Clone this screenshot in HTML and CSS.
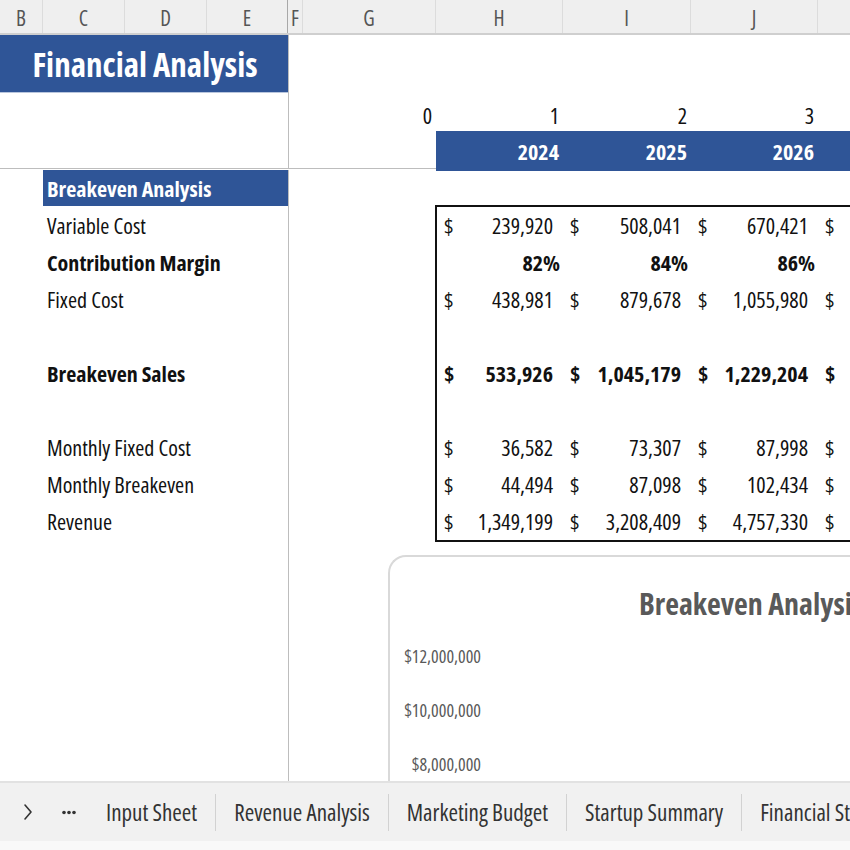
FILE: index.html
```html
<!DOCTYPE html>
<html>
<head>
<meta charset="utf-8">
<title>Financial Analysis</title>
<link rel="stylesheet" href="styles.css">
</head>
<body>
<div class="sheet">
  <div class="colheads">
    <div class="ch w-b">B</div>
    <div class="ch w-c">C</div>
    <div class="ch w-d">D</div>
    <div class="ch w-e ch-freeze">E</div>
    <div class="ch w-f">F</div>
    <div class="ch w-g">G</div>
    <div class="ch w-h">H</div>
    <div class="ch w-i">I</div>
    <div class="ch w-j">J</div>
    <div class="ch w-k"></div>
  </div>

  <div class="frozen-top">
    <div class="left-top">
      <div class="title">Financial Analysis</div>
    </div>
    <div class="right-top">
      <div class="rt-row rt-blank"></div>
      <div class="rt-row rt-idx">
        <div class="c-f"></div>
        <div class="num">0</div>
        <div class="num">1</div>
        <div class="num">2</div>
        <div class="num">3</div>
        <div></div>
      </div>
      <div class="rt-row rt-year">
        <div class="c-f"></div>
        <div></div>
        <div class="yr">2024</div>
        <div class="yr">2025</div>
        <div class="yr">2026</div>
        <div class="yr"></div>
      </div>
    </div>
  </div>

  <div class="main">
    <div class="left-pane">
      <div class="lrow lrow-head"><span class="lbl-head">Breakeven Analysis</span></div>
      <div class="lrow">Variable Cost</div>
      <div class="lrow bold">Contribution Margin</div>
      <div class="lrow">Fixed Cost</div>
      <div class="lrow"></div>
      <div class="lrow bold">Breakeven Sales</div>
      <div class="lrow"></div>
      <div class="lrow">Monthly Fixed Cost</div>
      <div class="lrow">Monthly Breakeven</div>
      <div class="lrow">Revenue</div>
    </div>

    <div class="right-pane">
      <div class="databox">
        <div class="drow">
          <div class="acc"><span>$</span><span>239,920</span></div>
          <div class="acc"><span>$</span><span>508,041</span></div>
          <div class="acc"><span>$</span><span>670,421</span></div>
          <div class="acc"><span>$</span><span></span></div>
        </div>
        <div class="drow bold">
          <div class="pct">82%</div>
          <div class="pct">84%</div>
          <div class="pct">86%</div>
          <div class="pct"></div>
        </div>
        <div class="drow">
          <div class="acc"><span>$</span><span>438,981</span></div>
          <div class="acc"><span>$</span><span>879,678</span></div>
          <div class="acc"><span>$</span><span>1,055,980</span></div>
          <div class="acc"><span>$</span><span></span></div>
        </div>
        <div class="drow"></div>
        <div class="drow bold">
          <div class="acc"><span>$</span><span>533,926</span></div>
          <div class="acc"><span>$</span><span>1,045,179</span></div>
          <div class="acc"><span>$</span><span>1,229,204</span></div>
          <div class="acc"><span>$</span><span></span></div>
        </div>
        <div class="drow"></div>
        <div class="drow">
          <div class="acc"><span>$</span><span>36,582</span></div>
          <div class="acc"><span>$</span><span>73,307</span></div>
          <div class="acc"><span>$</span><span>87,998</span></div>
          <div class="acc"><span>$</span><span></span></div>
        </div>
        <div class="drow">
          <div class="acc"><span>$</span><span>44,494</span></div>
          <div class="acc"><span>$</span><span>87,098</span></div>
          <div class="acc"><span>$</span><span>102,434</span></div>
          <div class="acc"><span>$</span><span></span></div>
        </div>
        <div class="drow">
          <div class="acc"><span>$</span><span>1,349,199</span></div>
          <div class="acc"><span>$</span><span>3,208,409</span></div>
          <div class="acc"><span>$</span><span>4,757,330</span></div>
          <div class="acc"><span>$</span><span></span></div>
        </div>
      </div>

      <div class="chart">
        <div class="chart-title">Breakeven Analysis</div>
        <div class="axis">
          <div class="tick">$12,000,000</div>
          <div class="tick">$10,000,000</div>
          <div class="tick">$8,000,000</div>
        </div>
      </div>
    </div>
  </div>

  <div class="tabs">
    <div class="tab-nav">
      <svg class="chev" width="10" height="18" viewBox="0 0 10 18"><path d="M2 2 L8 9 L2 16" fill="none" stroke="#333" stroke-width="1.6" stroke-linecap="round" stroke-linejoin="round"/></svg>
    </div>
    <div class="tab-more">
      <svg width="14" height="5" viewBox="0 0 14 5"><circle cx="2" cy="2.5" r="1.8" fill="#333"/><circle cx="7" cy="2.5" r="1.8" fill="#333"/><circle cx="12" cy="2.5" r="1.8" fill="#333"/></svg>
    </div>
    <div class="tab tab-first">Input Sheet</div>
    <div class="tab">Revenue Analysis</div>
    <div class="tab">Marketing Budget</div>
    <div class="tab">Startup Summary</div>
    <div class="tab tab-last">Financial Statements</div>
  </div>
  <div class="statusgap"></div>
</div>
</body>
</html>
```
FILE: styles.css
```css
* { box-sizing: border-box; }

html, body {
  margin: 0;
  padding: 0;
  background: #ffffff;
}

body {
  font-family: "Open Sans", "Liberation Sans", sans-serif;
  font-stretch: 75%;
  color: #111111;
  width: 850px;
  height: 850px;
  overflow: hidden;
}

.sheet {
  width: 850px;
  height: 850px;
  display: flex;
  flex-direction: column;
  overflow: hidden;
}

.bold { font-weight: 700; }

/* column headers */
.colheads {
  display: flex;
  height: 35px;
  flex: none;
  background: #efefef;
  border-bottom: 2px solid #cfcfcf;
}
.ch {
  flex: none;
  height: 33px;
  line-height: 36px;
  text-align: center;
  font-size: 21px;
  color: #555555;
  border-right: 1px solid #dcdcdc;
}
.ch-freeze { border-right: 1px solid #a8a8a8; }
.w-b { width: 43px; }
.w-c { width: 82px; }
.w-d { width: 82px; }
.w-e { width: 81px; }
.w-f { width: 15px; }
.w-g { width: 133px; }
.w-h { width: 127px; }
.w-i { width: 128px; }
.w-j { width: 127px; }
.w-k { flex: 1; border-right: none; }

/* frozen top rows */
.frozen-top {
  display: flex;
  height: 134px;
  flex: none;
  border-bottom: 1px solid #bdbdbd;
}
.left-top {
  width: 289px;
  flex: none;
  border-right: 1px solid #bdbdbd;
}
.title {
  height: 58px;
  background: #2f5597;
  color: #ffffff;
  font-weight: 700;
  font-size: 33px;
  line-height: 60px;
  text-align: center;
  padding-left: 2px;
  border-bottom: 1px solid #b9c6dd;
}
.right-top {
  flex: 1;
  display: flex;
  flex-direction: column;
}
.rt-row {
  display: grid;
  grid-template-columns: 14px 133px 127px 128px 127px 1fr;
}
.rt-blank { height: 59px; }
.rt-idx {
  height: 37px;
  font-size: 22px;
  color: #111111;
}
.num {
  text-align: right;
  padding-right: 4px;
  line-height: 42px;
}
.rt-year {
  height: 37px;
  font-size: 22px;
}
.yr {
  background: #2f5597;
  color: #ffffff;
  font-weight: 700;
  text-align: right;
  padding-right: 4px;
  line-height: 40px;
}

/* main area */
.main {
  flex: 1;
  min-height: 0;
  display: flex;
  overflow: hidden;
  padding-top: 1px;
}
.left-pane {
  width: 289px;
  flex: none;
  border-right: 1px solid #bdbdbd;
}
.lrow {
  height: 37px;
  line-height: 37px;
  font-size: 22px;
  padding-left: 47px;
  white-space: nowrap;
}
.lrow-head {
  margin-left: 43px;
  padding-left: 4px;
  background: #2f5597;
  color: #ffffff;
  font-weight: 700;
  height: 36px;
  line-height: 36px;
  margin-bottom: 1px;
}

.right-pane {
  flex: 1;
  min-width: 0;
  overflow: hidden;
  padding-top: 35px;
}
.databox {
  margin-left: 146px;
  width: 700px;
  border: 2px solid #111111;
  border-right: none;
}
.drow {
  display: grid;
  grid-template-columns: 126px 128px 127px 200px;
  height: 37px;
  font-size: 22px;
  line-height: 37px;
}
.acc {
  display: flex;
  justify-content: space-between;
  padding-left: 7px;
  padding-right: 10px;
}
.pct {
  text-align: right;
  padding-right: 3px;
}

/* chart */
.chart {
  margin-top: 13px;
  margin-left: 99px;
  width: 700px;
  height: 400px;
  border: 2px solid #d9d9d9;
  border-right: none;
  border-radius: 18px 0 0 0;
  padding-top: 25px;
}
.chart-title {
  margin-left: 249px;
  font-size: 30px;
  font-weight: 700;
  color: #595959;
  line-height: 44px;
  white-space: nowrap;
}
.axis {
  margin-top: 17px;
  width: 91px;
  display: flex;
  flex-direction: column;
  gap: 28px;
}
.tick {
  text-align: right;
  font-size: 18px;
  line-height: 26px;
  color: #595959;
  white-space: nowrap;
}

/* sheet tabs */
.tabs {
  flex: none;
  height: 60px;
  background: #f1f1f1;
  border-top: 2px solid #e2e2e2;
  display: flex;
  align-items: center;
  white-space: nowrap;
}
.tab-nav {
  flex: none;
  width: 58px;
  padding-left: 23px;
  display: flex;
  align-items: center;
}
.tab-more {
  flex: none;
  width: 48px;
  padding-left: 4px;
  display: flex;
  align-items: center;
}
.tab {
  flex: none;
  font-size: 23px;
  color: #333333;
  padding: 0 18px;
  height: 37px;
  line-height: 37px;
  border-right: 1px solid #d2d2d2;
}
.tab-first { padding-left: 0; }
.tab-last { border-right: none; }
.statusgap {
  flex: none;
  height: 9px;
  background: #f9f9f9;
}
```
